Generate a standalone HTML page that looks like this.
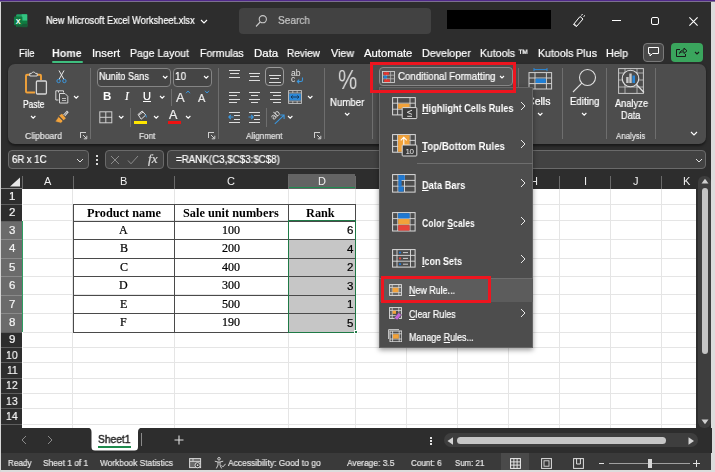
<!DOCTYPE html>
<html><head><meta charset="utf-8">
<style>
*{box-sizing:border-box;margin:0;padding:0}
html,body{width:715px;height:472px;overflow:hidden}
body{background:#dcdcdc;font-family:"Liberation Sans",sans-serif;position:relative;color:#fff}
.a{position:absolute}
.t{position:absolute;white-space:nowrap;line-height:1.16;will-change:transform;-webkit-text-stroke:0.22px currentColor}
u{text-decoration-thickness:0.7px;text-underline-offset:1px}
</style></head><body>
<div class="a" style="left:1.2px;top:0px;width:710.3px;height:470px;background:#2d2d2d;"></div>
<div class="a" style="left:0px;top:0px;width:715px;height:1.2px;background:#50288a;"></div>
<div class="a" style="left:0px;top:1.2px;width:715px;height:0.9px;background:#7c7090;"></div>
<div class="a" style="left:0px;top:2px;width:1.2px;height:470px;background:#d8d8d8;"></div>
<svg class="a" style="left:14px;top:14px" width="14" height="14" viewBox="0 0 14 14"><rect x="2.2" y="0.3" width="11" height="12.8" rx="1.2" fill="#21a366"/><rect x="7.7" y="0.3" width="5.5" height="6.4" fill="#33c481"/><rect x="7.7" y="6.7" width="5.5" height="6.4" fill="#107c41"/><rect x="2.2" y="9.8" width="11" height="3.3" fill="#185c37"/><rect x="0" y="2.6" width="8.4" height="8.6" rx="0.8" fill="#107c41"/><text x="4.2" y="9.6" font-size="7.2" font-weight="bold" fill="#fff" text-anchor="middle" font-family="Liberation Sans">X</text></svg>
<div class="t" style="left:46.2px;top:15.4px;font-size:10.2px;color:#fff;font-family:'Liberation Sans',sans-serif;transform:scaleX(0.906);transform-origin:0 50%;">New Microsoft Excel Worksheet.xlsx</div>
<svg class="a" style="left:199.5px;top:19.0px" width="8" height="5" viewBox="0 0 8 5"><path d="M1 1 L4 4 L7 1" stroke="#fff" stroke-width="1.1" fill="none"/></svg>
<div class="a" style="left:239px;top:8px;width:192px;height:26px;background:#424242;border-radius:4px;"></div>
<svg class="a" style="left:255px;top:14px" width="13" height="14" viewBox="0 0 13 14"><circle cx="7.8" cy="5.2" r="3.6" stroke="#c8c8c8" stroke-width="1.1" fill="none"/><path d="M5.2 8 L1 12.5" stroke="#c8c8c8" stroke-width="1.1"/></svg>
<div class="t" style="left:278.0px;top:15.4px;font-size:10.2px;color:#c4c4c4;font-family:'Liberation Sans',sans-serif;transform:scaleX(0.990);transform-origin:0 50%;">Search</div>
<div class="a" style="left:447px;top:9.6px;width:103.8px;height:19px;background:#000;"></div>
<svg class="a" style="left:571px;top:13px" width="16" height="16" viewBox="0 0 16 16"><path d="M2.5 11.5 L9 3.5 L12 6 L5.5 13.5 Z M3 10.8 L5.8 13.2 M10.5 2.5 L11.5 1 M12.5 3.5 L14 2.5" stroke="#fff" stroke-width="1" fill="none"/></svg>
<div class="a" style="left:611.8px;top:20px;width:9.2px;height:1px;background:#fff;"></div>
<div class="a" style="left:650.8px;top:16.8px;width:8.6px;height:8.6px;border:1px solid #fff;border-radius:2px;"></div>
<svg class="a" style="left:689px;top:17px" width="9" height="9" viewBox="0 0 9 9"><path d="M0.4 0.4 L8.6 8.6 M8.6 0.4 L0.4 8.6" stroke="#fff" stroke-width="1.1"/></svg>
<div class="t" style="left:18.6px;top:46.6px;font-size:11px;color:#fff;font-family:'Liberation Sans',sans-serif;transform:scaleX(0.880);transform-origin:0 50%;">File</div>
<div class="t" style="left:52.4px;top:46.6px;font-size:11px;color:#fff;font-family:'Liberation Sans',sans-serif;transform:scaleX(0.969);transform-origin:0 50%;font-weight:bold;-webkit-text-stroke:0;">Home</div>
<div class="t" style="left:92.0px;top:46.6px;font-size:11px;color:#fff;font-family:'Liberation Sans',sans-serif;transform:scaleX(1.018);transform-origin:0 50%;">Insert</div>
<div class="t" style="left:130.0px;top:46.6px;font-size:11px;color:#fff;font-family:'Liberation Sans',sans-serif;transform:scaleX(0.955);transform-origin:0 50%;">Page Layout</div>
<div class="t" style="left:200.0px;top:46.6px;font-size:11px;color:#fff;font-family:'Liberation Sans',sans-serif;transform:scaleX(0.953);transform-origin:0 50%;">Formulas</div>
<div class="t" style="left:253.8px;top:46.6px;font-size:11px;color:#fff;font-family:'Liberation Sans',sans-serif;transform:scaleX(1.042);transform-origin:0 50%;">Data</div>
<div class="t" style="left:287.0px;top:46.6px;font-size:11px;color:#fff;font-family:'Liberation Sans',sans-serif;transform:scaleX(0.915);transform-origin:0 50%;">Review</div>
<div class="t" style="left:331.0px;top:46.6px;font-size:11px;color:#fff;font-family:'Liberation Sans',sans-serif;transform:scaleX(0.973);transform-origin:0 50%;">View</div>
<div class="t" style="left:364.0px;top:46.6px;font-size:11px;color:#fff;font-family:'Liberation Sans',sans-serif;transform:scaleX(1.028);transform-origin:0 50%;">Automate</div>
<div class="t" style="left:422.0px;top:46.6px;font-size:11px;color:#fff;font-family:'Liberation Sans',sans-serif;transform:scaleX(0.973);transform-origin:0 50%;">Developer</div>
<div class="t" style="left:480.4px;top:46.6px;font-size:11px;color:#fff;font-family:'Liberation Sans',sans-serif;transform:scaleX(0.952);transform-origin:0 50%;">Kutools ™</div>
<div class="t" style="left:537.8px;top:46.6px;font-size:11px;color:#fff;font-family:'Liberation Sans',sans-serif;transform:scaleX(0.963);transform-origin:0 50%;">Kutools Plus</div>
<div class="t" style="left:606.0px;top:46.6px;font-size:11px;color:#fff;font-family:'Liberation Sans',sans-serif;transform:scaleX(0.973);transform-origin:0 50%;">Help</div>
<div class="a" style="left:52px;top:61px;width:31px;height:2px;background:#3fbf7f;border-radius:1px;"></div>
<div class="a" style="left:643px;top:43px;width:21px;height:19px;background:#484848;border:1px solid #7a7a7a;border-radius:4px;"></div>
<svg class="a" style="left:647px;top:46px" width="13" height="12" viewBox="0 0 13 12"><path d="M1.5 1.5 H11.5 V7.5 H5.5 L3 10 V7.5 H1.5 Z" stroke="#fff" stroke-width="1" fill="none"/></svg>
<div class="a" style="left:670.5px;top:43px;width:32.5px;height:19px;background:#3aa55d;border-radius:4px;"></div>
<svg class="a" style="left:675px;top:46px" width="13" height="12" viewBox="0 0 13 12"><path d="M5 3.5 H1.5 V10.5 H10.5 V8 M4.5 7.5 C5 5 7 4 9 4 V2 L12 4.8 L9 7.5 V5.8 C7.5 5.8 5.5 6 4.5 7.5 Z" stroke="#1a1a1a" stroke-width="1" fill="none"/></svg>
<svg class="a" style="left:693.5px;top:50.5px" width="6" height="4" viewBox="0 0 6 4"><path d="M1 1 L3 3 L5 1" stroke="#1a1a1a" stroke-width="1.1" fill="none"/></svg>
<div class="a" style="left:8px;top:64px;width:698px;height:79.5px;background:#4d4d4d;border-radius:7px;box-shadow:0 1.5px 2.5px rgba(0,0,0,0.45);"></div>
<div class="a" style="left:90px;top:68px;width:1px;height:71px;background:#6e6e6e;"></div>
<div class="a" style="left:217.5px;top:68px;width:1px;height:71px;background:#6e6e6e;"></div>
<div class="a" style="left:323.5px;top:68px;width:1px;height:71px;background:#6e6e6e;"></div>
<div class="a" style="left:372px;top:68px;width:1px;height:71px;background:#6e6e6e;"></div>
<div class="a" style="left:562.3px;top:68px;width:1px;height:71px;background:#6e6e6e;"></div>
<div class="a" style="left:605.8px;top:68px;width:1px;height:71px;background:#6e6e6e;"></div>
<div class="a" style="left:655px;top:68px;width:1px;height:71px;background:#6e6e6e;"></div>
<svg class="a" style="left:24px;top:70px" width="24" height="26" viewBox="0 0 24 26"><path d="M6 4.8 H3 a1 1 0 0 0 -1 1 V21.5 a1 1 0 0 0 1 1 H11" stroke="#f2a23a" stroke-width="1.9" fill="none"/><path d="M13 4.8 H16 a1 1 0 0 1 1 1 V10" stroke="#f2a23a" stroke-width="1.9" fill="none"/><path d="M5.8 6 V3.4 H7.6 a2 2 0 0 1 3.8 0 H13.2 V6 Z" stroke="#d8d8d8" stroke-width="1" fill="#4d4d4d"/><rect x="12.4" y="11" width="10" height="13" rx="1" stroke="#d8d8d8" stroke-width="1.3" fill="#4d4d4d"/></svg>
<div class="t" style="left:23.3px;top:98.8px;font-size:10.3px;color:#fff;font-family:'Liberation Sans',sans-serif;transform:scaleX(0.816);transform-origin:0 50%;">Paste</div>
<svg class="a" style="left:29.8px;top:114.60000000000001px" width="6.4" height="4.2" viewBox="0 0 6.4 4.2"><path d="M1 1 L3.2 3.2 L5.4 1" stroke="#fff" stroke-width="1.1" fill="none"/></svg>
<svg class="a" style="left:56px;top:70px" width="11" height="14" viewBox="0 0 11 14"><path d="M3 0.5 L7.8 9.2 M8 0.5 L3.2 9.2" stroke="#e8e8e8" stroke-width="1" fill="none"/><circle cx="2.6" cy="11" r="1.7" stroke="#3a96dd" stroke-width="1" fill="none"/><circle cx="8.4" cy="11" r="1.7" stroke="#3a96dd" stroke-width="1" fill="none"/></svg>
<svg class="a" style="left:55px;top:90px" width="14" height="14" viewBox="0 0 14 14"><path d="M3.5 2.5 V0.8 H8.5 V2.5" stroke="#d8d8d8" stroke-width="1" fill="none"/><path d="M3.5 10 H0.8 V0.8 H3.5" stroke="#d8d8d8" stroke-width="1" fill="none"/><path d="M4.5 3.5 H10 L12.8 6.3 V13 H4.5 Z" stroke="#d8d8d8" stroke-width="1" fill="#4d4d4d"/><path d="M7 8.5 H11 M7 10.5 H11" stroke="#d8d8d8" stroke-width="0.8"/></svg>
<svg class="a" style="left:72.8px;top:95.4px" width="6.4" height="4.2" viewBox="0 0 6.4 4.2"><path d="M1 1 L3.2 3.2 L5.4 1" stroke="#fff" stroke-width="1.1" fill="none"/></svg>
<svg class="a" style="left:54px;top:110px" width="15" height="14" viewBox="0 0 15 14"><path d="M9.5 5 L13 1.2 L14 2.2 L10.8 6" stroke="#d8d8d8" stroke-width="1.1" fill="none"/><path d="M5.2 5.6 L8 3.8 L11.8 8.2 L9.6 10.2 Z" fill="#f2a23a"/><path d="M4.6 6.6 L9 11 L7 13.2 L1.2 11.6 Z" fill="#f2a23a" stroke="#4d4d4d" stroke-width="0.6"/></svg>
<div class="t" style="left:24.7px;top:130.9px;font-size:9.2px;color:#e2e2e2;font-family:'Liberation Sans',sans-serif;transform:scaleX(0.940);transform-origin:0 50%;">Clipboard</div>
<svg class="a" style="left:80px;top:132px" width="8" height="8" viewBox="0 0 8 8"><path d="M0.5 3 V0.5 H3" stroke="#d0d0d0" stroke-width="1" fill="none"/><path d="M0.5 0.5 H6 M0.5 0.5 V6" stroke="#d0d0d0" stroke-width="1" fill="none"/><path d="M3 3 L6.5 6.5 M6.8 3.8 V6.8 H3.8" stroke="#d0d0d0" stroke-width="1" fill="none"/></svg>
<svg class="a" style="left:208px;top:132px" width="8" height="8" viewBox="0 0 8 8"><path d="M0.5 3 V0.5 H3" stroke="#d0d0d0" stroke-width="1" fill="none"/><path d="M0.5 0.5 H6 M0.5 0.5 V6" stroke="#d0d0d0" stroke-width="1" fill="none"/><path d="M3 3 L6.5 6.5 M6.8 3.8 V6.8 H3.8" stroke="#d0d0d0" stroke-width="1" fill="none"/></svg>
<svg class="a" style="left:314px;top:132px" width="8" height="8" viewBox="0 0 8 8"><path d="M0.5 3 V0.5 H3" stroke="#d0d0d0" stroke-width="1" fill="none"/><path d="M0.5 0.5 H6 M0.5 0.5 V6" stroke="#d0d0d0" stroke-width="1" fill="none"/><path d="M3 3 L6.5 6.5 M6.8 3.8 V6.8 H3.8" stroke="#d0d0d0" stroke-width="1" fill="none"/></svg>
<div class="a" style="left:96.5px;top:67.5px;width:74.5px;height:19px;background:#454545;border:1px solid #858585;border-radius:4px;"></div>
<div class="t" style="left:98.7px;top:71.3px;font-size:10.2px;color:#fff;font-family:'Liberation Sans',sans-serif;transform:scaleX(0.898);transform-origin:0 50%;">Nunito Sans</div>
<svg class="a" style="left:162.3px;top:75.4px" width="6.4" height="4.2" viewBox="0 0 6.4 4.2"><path d="M1 1 L3.2 3.2 L5.4 1" stroke="#fff" stroke-width="1.1" fill="none"/></svg>
<div class="a" style="left:172.5px;top:67.5px;width:39px;height:19px;background:#454545;border:1px solid #858585;border-radius:4px;"></div>
<div class="t" style="left:175.0px;top:71.3px;font-size:10.2px;color:#fff;font-family:'Liberation Sans',sans-serif;transform:scaleX(0.969);transform-origin:0 50%;">10</div>
<svg class="a" style="left:203.20000000000002px;top:75.4px" width="6.4" height="4.2" viewBox="0 0 6.4 4.2"><path d="M1 1 L3.2 3.2 L5.4 1" stroke="#fff" stroke-width="1.1" fill="none"/></svg>
<div class="t" style="left:103.0px;top:90.3px;font-size:11.5px;color:#fff;font-family:'Liberation Sans',sans-serif;font-weight:bold;-webkit-text-stroke:0;">B</div>
<div class="t" style="left:125.0px;top:90.3px;font-size:11.5px;color:#fff;font-family:'Liberation Sans',sans-serif;font-style:italic;font-family:'Liberation Serif',serif;">I</div>
<div class="t" style="left:143.0px;top:90.1px;font-size:11px;color:#fff;font-family:'Liberation Sans',sans-serif;text-decoration:underline;">U</div>
<svg class="a" style="left:158.5px;top:95.4px" width="6.4" height="4.2" viewBox="0 0 6.4 4.2"><path d="M1 1 L3.2 3.2 L5.4 1" stroke="#fff" stroke-width="1.1" fill="none"/></svg>
<div class="t" style="left:176.0px;top:90.0px;font-size:13px;color:#e8e8e8;font-family:'Liberation Sans',sans-serif;">A</div>
<svg class="a" style="left:185px;top:90px" width="6" height="4" viewBox="0 0 6 4"><path d="M1 3.2 L3 1 L5 3.2" stroke="#3a96dd" stroke-width="1" fill="none"/></svg>
<div class="t" style="left:197.6px;top:92.1px;font-size:11px;color:#e8e8e8;font-family:'Liberation Sans',sans-serif;">A</div>
<svg class="a" style="left:204px;top:90px" width="6" height="4" viewBox="0 0 6 4"><path d="M1 0.8 L3 3 L5 0.8" stroke="#3a96dd" stroke-width="1" fill="none"/></svg>
<svg class="a" style="left:99px;top:111px" width="14" height="13" viewBox="0 0 14 13"><rect x="0.8" y="0.8" width="12" height="11" stroke="#d0d0d0" stroke-width="1" fill="none"/><path d="M6.8 1 V12 M1 6.3 H13" stroke="#d0d0d0" stroke-width="1"/></svg>
<svg class="a" style="left:117.8px;top:115.4px" width="6.4" height="4.2" viewBox="0 0 6.4 4.2"><path d="M1 1 L3.2 3.2 L5.4 1" stroke="#fff" stroke-width="1.1" fill="none"/></svg>
<div class="a" style="left:129.5px;top:108px;width:1px;height:19px;background:#6e6e6e;"></div>
<div class="a" style="left:170.6px;top:88.5px;width:1px;height:17px;background:#6e6e6e;"></div>
<svg class="a" style="left:134px;top:110px" width="14" height="11" viewBox="0 0 14 11"><path d="M4 4.5 L8.2 1 L11.8 5 L7.2 9.2 Z" stroke="#e0e0e0" stroke-width="1" fill="none"/><path d="M5 5 L9 2" stroke="#e0e0e0" stroke-width="1"/><path d="M11 4.2 C12.6 5 13 6.2 12.6 7.8 C11.8 7 11.4 6 11 4.2Z" fill="#3a96dd"/></svg>
<div class="a" style="left:134px;top:120.5px;width:13px;height:3px;background:#ffe600;"></div>
<svg class="a" style="left:152.5px;top:115.4px" width="6.4" height="4.2" viewBox="0 0 6.4 4.2"><path d="M1 1 L3.2 3.2 L5.4 1" stroke="#fff" stroke-width="1.1" fill="none"/></svg>
<div class="t" style="left:169.0px;top:107.8px;font-size:12.5px;color:#f0f0f0;font-family:'Liberation Sans',sans-serif;">A</div>
<div class="a" style="left:167.5px;top:120.5px;width:13px;height:3px;background:#ee1111;"></div>
<svg class="a" style="left:184.8px;top:115.4px" width="6.4" height="4.2" viewBox="0 0 6.4 4.2"><path d="M1 1 L3.2 3.2 L5.4 1" stroke="#fff" stroke-width="1.1" fill="none"/></svg>
<div class="t" style="left:139.0px;top:130.9px;font-size:9.2px;color:#e2e2e2;font-family:'Liberation Sans',sans-serif;transform:scaleX(0.891);transform-origin:0 50%;">Font</div>
<div class="a" style="left:228.5px;top:69.5px;width:11.5px;height:1.2px;background:#dedede;"></div>
<div class="a" style="left:229.7px;top:73.2px;width:9px;height:1.2px;background:#dedede;"></div>
<div class="a" style="left:228.5px;top:76.9px;width:11.5px;height:1.2px;background:#dedede;"></div>
<div class="a" style="left:248.5px;top:72.5px;width:11.5px;height:1.2px;background:#dedede;"></div>
<div class="a" style="left:249.7px;top:76.2px;width:9px;height:1.2px;background:#dedede;"></div>
<div class="a" style="left:248.5px;top:79.9px;width:11.5px;height:1.2px;background:#dedede;"></div>
<div class="a" style="left:265.2px;top:67.2px;width:18.8px;height:18.8px;background:#494949;border:1px solid #9a9a9a;border-radius:4px;"></div>
<div class="a" style="left:269px;top:74.5px;width:11.5px;height:1.2px;background:#dedede;"></div>
<div class="a" style="left:270.2px;top:78.2px;width:9px;height:1.2px;background:#dedede;"></div>
<div class="a" style="left:269px;top:81.9px;width:11.5px;height:1.2px;background:#dedede;"></div>
<div class="t" style="left:290.5px;top:68.8px;font-size:8.6px;color:#e4e4e4;font-family:'Liberation Sans',sans-serif;transform:scaleX(0.993);transform-origin:0 50%;-webkit-text-stroke:0;">ab</div>
<div class="t" style="left:290.8px;top:75.3px;font-size:8.6px;color:#e4e4e4;font-family:'Liberation Sans',sans-serif;-webkit-text-stroke:0;">c</div>
<svg class="a" style="left:295.5px;top:76.5px" width="8" height="8" viewBox="0 0 8 8"><path d="M6.5 0.5 V3 a1.5 1.5 0 0 1 -1.5 1.5 H1.5 M3.2 2.6 L1.3 4.5 L3.2 6.4" stroke="#3a96dd" stroke-width="1.1" fill="none"/></svg>
<div class="a" style="left:228.5px;top:91.5px;width:11.5px;height:1.2px;background:#dedede;"></div>
<div class="a" style="left:228.5px;top:95.1px;width:8px;height:1.2px;background:#dedede;"></div>
<div class="a" style="left:228.5px;top:98.7px;width:11.5px;height:1.2px;background:#dedede;"></div>
<div class="a" style="left:228.5px;top:102.3px;width:8px;height:1.2px;background:#dedede;"></div>
<div class="a" style="left:248.5px;top:91.5px;width:11.5px;height:1.2px;background:#dedede;"></div>
<div class="a" style="left:250.5px;top:95.1px;width:7.5px;height:1.2px;background:#dedede;"></div>
<div class="a" style="left:248.5px;top:98.7px;width:11.5px;height:1.2px;background:#dedede;"></div>
<div class="a" style="left:250.5px;top:102.3px;width:7.5px;height:1.2px;background:#dedede;"></div>
<div class="a" style="left:269.5px;top:91.5px;width:11.5px;height:1.2px;background:#dedede;"></div>
<div class="a" style="left:273.0px;top:95.1px;width:8px;height:1.2px;background:#dedede;"></div>
<div class="a" style="left:269.5px;top:98.7px;width:11.5px;height:1.2px;background:#dedede;"></div>
<div class="a" style="left:273.0px;top:102.3px;width:8px;height:1.2px;background:#dedede;"></div>
<svg class="a" style="left:288px;top:90px" width="14" height="14" viewBox="0 0 14 14"><rect x="0.6" y="0.6" width="12.8" height="12.8" stroke="#c8c8c8" stroke-width="0.9" fill="none"/><path d="M0.6 3 H13.4 M0.6 11 H13.4 M4.8 0.6 V3 M9.2 0.6 V3 M4.8 11 V13.4 M9.2 11 V13.4" stroke="#c8c8c8" stroke-width="0.8"/><rect x="1.2" y="3.6" width="11.6" height="6.8" fill="#2b88d8"/><path d="M3 7 H11 M4.6 5.4 L3 7 L4.6 8.6 M9.4 5.4 L11 7 L9.4 8.6" stroke="#16324e" stroke-width="0.9" fill="none"/></svg>
<svg class="a" style="left:306.8px;top:95.4px" width="6.4" height="4.2" viewBox="0 0 6.4 4.2"><path d="M1 1 L3.2 3.2 L5.4 1" stroke="#fff" stroke-width="1.1" fill="none"/></svg>
<div class="a" style="left:228.5px;top:111.5px;width:11.5px;height:1.2px;background:#dedede;"></div>
<div class="a" style="left:234.0px;top:115.1px;width:6px;height:1.2px;background:#dedede;"></div>
<div class="a" style="left:234.0px;top:118.7px;width:6px;height:1.2px;background:#dedede;"></div>
<div class="a" style="left:228.5px;top:122.3px;width:11.5px;height:1.2px;background:#dedede;"></div>
<svg class="a" style="left:228px;top:114px" width="6" height="6" viewBox="0 0 6 6"><path d="M5.5 3 H1 M2.8 1 L0.8 3 L2.8 5" stroke="#3a96dd" stroke-width="1.1" fill="none"/></svg>
<div class="a" style="left:248.5px;top:111.5px;width:11.5px;height:1.2px;background:#dedede;"></div>
<div class="a" style="left:254.0px;top:115.1px;width:6px;height:1.2px;background:#dedede;"></div>
<div class="a" style="left:254.0px;top:118.7px;width:6px;height:1.2px;background:#dedede;"></div>
<div class="a" style="left:248.5px;top:122.3px;width:11.5px;height:1.2px;background:#dedede;"></div>
<svg class="a" style="left:248px;top:114px" width="6" height="6" viewBox="0 0 6 6"><path d="M0.5 3 H5 M3.2 1 L5.2 3 L3.2 5" stroke="#3a96dd" stroke-width="1.1" fill="none"/></svg>
<div class="a" style="left:265.5px;top:108px;width:1px;height:19px;background:#6e6e6e;"></div>
<svg class="a" style="left:268px;top:108px" width="18" height="17" viewBox="0 0 18 17"><text x="7" y="10.3" font-size="8.6" fill="#e4e4e4" text-anchor="middle" font-family="Liberation Sans" transform="rotate(-45 6.5 7)">ab</text><path d="M6.8 15.8 L15.8 7.4 M12.2 7 H16.1 V10.9" stroke="#3a96dd" stroke-width="1.1" fill="none"/></svg>
<svg class="a" style="left:286.8px;top:115.4px" width="6.4" height="4.2" viewBox="0 0 6.4 4.2"><path d="M1 1 L3.2 3.2 L5.4 1" stroke="#fff" stroke-width="1.1" fill="none"/></svg>
<div class="t" style="left:245.5px;top:130.9px;font-size:9.2px;color:#e2e2e2;font-family:'Liberation Sans',sans-serif;transform:scaleX(0.892);transform-origin:0 50%;">Alignment</div>
<div class="t" style="left:337.8px;top:65.1px;font-size:27px;color:#d8d8d8;font-family:'Liberation Sans',sans-serif;-webkit-text-stroke:0;transform:scaleX(0.8);transform-origin:0 50%;">%</div>
<div class="t" style="left:330.4px;top:96.8px;font-size:10.3px;color:#fff;font-family:'Liberation Sans',sans-serif;transform:scaleX(0.934);transform-origin:0 50%;">Number</div>
<svg class="a" style="left:343.8px;top:112.2px" width="6.4" height="4.2" viewBox="0 0 6.4 4.2"><path d="M1 1 L3.2 3.2 L5.4 1" stroke="#fff" stroke-width="1.1" fill="none"/></svg>
<div class="a" style="left:379px;top:67px;width:133.5px;height:18.5px;background:#575757;border:1px solid #8c8c8c;border-radius:4px;"></div>
<svg class="a" style="left:382px;top:70.5px" width="13" height="12" viewBox="0 0 13 12"><rect x="0.5" y="0.5" width="12" height="11" stroke="#d0d0d0" stroke-width="0.9" fill="none"/><path d="M0.5 4.2 H12.5 M0.5 7.8 H12.5 M4.6 0.5 V11.5 M8.6 0.5 V11.5" stroke="#c0c0c0" stroke-width="0.7"/><rect x="1.6" y="1.2" width="5.4" height="2.6" fill="#e8342e"/><rect x="1.6" y="4.8" width="3.4" height="2.6" fill="#1f7fd6"/><rect x="2.2" y="8.4" width="5.6" height="2.6" fill="#e8342e"/></svg>
<div class="t" style="left:398.3px;top:70.9px;font-size:10.2px;color:#fff;font-family:'Liberation Sans',sans-serif;transform:scaleX(0.952);transform-origin:0 50%;">Conditional Formatting</div>
<svg class="a" style="left:499px;top:74.8px" width="6" height="4" viewBox="0 0 6 4"><path d="M1 1 L3 3 L5 1" stroke="#fff" stroke-width="1.1" fill="none"/></svg>
<div class="a" style="left:518px;top:68px;width:1px;height:20px;background:#6e6e6e;"></div>
<svg class="a" style="left:528px;top:67px" width="25" height="23" viewBox="0 0 25 23"><path d="M6 2.6 H19 M6 1 V4.2 M19 1 V4.2" stroke="#2b88d8" stroke-width="1"/><rect x="1" y="5.6" width="22.6" height="16.4" stroke="#d0d0d0" stroke-width="1" fill="none"/><path d="M1 11 H23.6 M1 16.6 H23.6 M7 5.6 V22 M18.4 5.6 V22" stroke="#d0d0d0" stroke-width="1"/><rect x="7.6" y="11.6" width="10.2" height="4.4" fill="#1f7fd6"/></svg>
<div class="t" style="left:527.0px;top:96.0px;font-size:10.3px;color:#fff;font-family:'Liberation Sans',sans-serif;transform:scaleX(1.026);transform-origin:0 50%;">Cells</div>
<svg class="a" style="left:536.8px;top:112.10000000000001px" width="6.4" height="4.2" viewBox="0 0 6.4 4.2"><path d="M1 1 L3.2 3.2 L5.4 1" stroke="#fff" stroke-width="1.1" fill="none"/></svg>
<svg class="a" style="left:572px;top:68px" width="26" height="26" viewBox="0 0 26 26"><circle cx="15.5" cy="9.5" r="8" stroke="#e0e0e0" stroke-width="1.1" fill="none"/><path d="M9.8 15.2 L1 24" stroke="#e0e0e0" stroke-width="1.1"/></svg>
<div class="t" style="left:569.5px;top:95.5px;font-size:10.3px;color:#fff;font-family:'Liberation Sans',sans-serif;transform:scaleX(0.937);transform-origin:0 50%;">Editing</div>
<svg class="a" style="left:580.8px;top:112.10000000000001px" width="6.4" height="4.2" viewBox="0 0 6.4 4.2"><path d="M1 1 L3.2 3.2 L5.4 1" stroke="#fff" stroke-width="1.1" fill="none"/></svg>
<svg class="a" style="left:618px;top:68px" width="27" height="27" viewBox="0 0 27 27"><rect x="0.6" y="0.6" width="24.8" height="24.8" stroke="#c8c8c8" stroke-width="1" fill="none"/><path d="M0.6 5 H25.4 M0.6 12 H25.4 M0.6 19 H25.4 M7 0.6 V25.4 M19 0.6 V25.4" stroke="#c8c8c8" stroke-width="0.8"/><circle cx="12.5" cy="10.5" r="8.3" fill="#4d4d4d" stroke="#e0e0e0" stroke-width="1.1"/><path d="M18.5 16.5 L26 24.5" stroke="#e0e0e0" stroke-width="1.2"/><rect x="8.2" y="9" width="2.4" height="6" fill="#c8c8c8"/><rect x="11.3" y="5.5" width="2.4" height="9.5" fill="#c8c8c8"/><rect x="14.4" y="7.5" width="2.6" height="7.5" fill="#2b88d8"/></svg>
<div class="t" style="left:615.0px;top:97.5px;font-size:10.3px;color:#fff;font-family:'Liberation Sans',sans-serif;transform:scaleX(0.901);transform-origin:0 50%;">Analyze</div>
<div class="t" style="left:621.4px;top:110.0px;font-size:10.3px;color:#fff;font-family:'Liberation Sans',sans-serif;transform:scaleX(0.892);transform-origin:0 50%;">Data</div>
<div class="t" style="left:616.4px;top:130.9px;font-size:9.2px;color:#e2e2e2;font-family:'Liberation Sans',sans-serif;transform:scaleX(0.858);transform-origin:0 50%;">Analysis</div>
<svg class="a" style="left:690px;top:130.5px" width="8" height="5" viewBox="0 0 8 5"><path d="M1 1 L4 4 L7 1" stroke="#fff" stroke-width="1.1" fill="none"/></svg>
<div class="a" style="left:8px;top:150px;width:80.5px;height:18.5px;background:#424242;border:1px solid #6a6a6a;border-radius:4px;"></div>
<div class="t" style="left:12.3px;top:153.9px;font-size:10.2px;color:#fff;font-family:'Liberation Sans',sans-serif;transform:scaleX(0.936);transform-origin:0 50%;">6R x 1C</div>
<svg class="a" style="left:76px;top:157.5px" width="8" height="5" viewBox="0 0 8 5"><path d="M1 1 L4 4 L7 1" stroke="#e0e0e0" stroke-width="1" fill="none"/></svg>
<div class="a" style="left:96px;top:155px;width:1.5px;height:1.5px;background:#d8d8d8;"></div>
<div class="a" style="left:96px;top:159px;width:1.5px;height:1.5px;background:#d8d8d8;"></div>
<div class="a" style="left:96px;top:163px;width:1.5px;height:1.5px;background:#d8d8d8;"></div>
<div class="a" style="left:104.5px;top:150px;width:59px;height:18.5px;background:#424242;border:1px solid #6a6a6a;border-radius:4px;"></div>
<svg class="a" style="left:110px;top:154.5px" width="10" height="10" viewBox="0 0 10 10"><path d="M1 1 L9 9 M9 1 L1 9" stroke="#8c8c8c" stroke-width="1"/></svg>
<svg class="a" style="left:127px;top:154.5px" width="12" height="10" viewBox="0 0 12 10"><path d="M1 5.5 L4 8.8 L11 1" stroke="#8c8c8c" stroke-width="1" fill="none"/></svg>
<div class="t" style="left:147.5px;top:151.8px;font-size:12.5px;color:#d8d8d8;font-family:'Liberation Serif',serif;transform:scaleX(1.056);transform-origin:0 50%;font-style:italic;">fx</div>
<div class="a" style="left:167px;top:150px;width:538.5px;height:18.5px;background:#424242;border:1px solid #6a6a6a;border-radius:4px;"></div>
<div class="t" style="left:175.5px;top:153.9px;font-size:10.2px;color:#fff;font-family:'Liberation Sans',sans-serif;transform:scaleX(0.958);transform-origin:0 50%;">=RANK(C3,$C$3:$C$8)</div>
<svg class="a" style="left:694.5px;top:157.5px" width="8" height="5" viewBox="0 0 8 5"><path d="M1 1 L4 4 L7 1" stroke="#e0e0e0" stroke-width="1" fill="none"/></svg>
<div class="a" style="left:1.3px;top:174px;width:694.4000000000001px;height:14.5px;background:#2d2d2d;"></div>
<div class="a" style="left:1.3px;top:188.5px;width:694.4000000000001px;height:239.0px;background:#fff;"></div>
<div class="a" style="left:72px;top:188.5px;width:1px;height:239.0px;background:#e5e5e5;"></div>
<div class="a" style="left:174px;top:188.5px;width:1px;height:239.0px;background:#e5e5e5;"></div>
<div class="a" style="left:288px;top:188.5px;width:1px;height:239.0px;background:#e5e5e5;"></div>
<div class="a" style="left:355px;top:188.5px;width:1px;height:239.0px;background:#e5e5e5;"></div>
<div class="a" style="left:406px;top:188.5px;width:1px;height:239.0px;background:#e5e5e5;"></div>
<div class="a" style="left:457px;top:188.5px;width:1px;height:239.0px;background:#e5e5e5;"></div>
<div class="a" style="left:508px;top:188.5px;width:1px;height:239.0px;background:#e5e5e5;"></div>
<div class="a" style="left:559px;top:188.5px;width:1px;height:239.0px;background:#e5e5e5;"></div>
<div class="a" style="left:610px;top:188.5px;width:1px;height:239.0px;background:#e5e5e5;"></div>
<div class="a" style="left:661px;top:188.5px;width:1px;height:239.0px;background:#e5e5e5;"></div>
<div class="a" style="left:22.5px;top:204px;width:673.2px;height:1px;background:#e5e5e5;"></div>
<div class="a" style="left:22.5px;top:220px;width:673.2px;height:1px;background:#e5e5e5;"></div>
<div class="a" style="left:22.5px;top:239px;width:673.2px;height:1px;background:#e5e5e5;"></div>
<div class="a" style="left:22.5px;top:258px;width:673.2px;height:1px;background:#e5e5e5;"></div>
<div class="a" style="left:22.5px;top:276px;width:673.2px;height:1px;background:#e5e5e5;"></div>
<div class="a" style="left:22.5px;top:294px;width:673.2px;height:1px;background:#e5e5e5;"></div>
<div class="a" style="left:22.5px;top:313px;width:673.2px;height:1px;background:#e5e5e5;"></div>
<div class="a" style="left:22.5px;top:332px;width:673.2px;height:1px;background:#e5e5e5;"></div>
<div class="a" style="left:22.5px;top:347px;width:673.2px;height:1px;background:#e5e5e5;"></div>
<div class="a" style="left:22.5px;top:362px;width:673.2px;height:1px;background:#e5e5e5;"></div>
<div class="a" style="left:22.5px;top:378px;width:673.2px;height:1px;background:#e5e5e5;"></div>
<div class="a" style="left:22.5px;top:393px;width:673.2px;height:1px;background:#e5e5e5;"></div>
<div class="a" style="left:22.5px;top:408px;width:673.2px;height:1px;background:#e5e5e5;"></div>
<div class="a" style="left:22.5px;top:424px;width:673.2px;height:1px;background:#e5e5e5;"></div>
<div class="a" style="left:288.3px;top:174px;width:67.2px;height:14.5px;background:#636363;"></div>
<div class="a" style="left:288.3px;top:187.3px;width:67.2px;height:1.2px;background:#1f8a50;"></div>
<div class="t" style="left:44.1px;top:175.3px;font-size:11px;color:#f0f0f0;font-family:'Liberation Sans',sans-serif;-webkit-text-stroke:0;">A</div>
<div class="a" style="left:72.5px;top:176px;width:1px;height:12.5px;background:#6a6a6a;"></div>
<div class="t" style="left:119.8px;top:175.3px;font-size:11px;color:#f0f0f0;font-family:'Liberation Sans',sans-serif;-webkit-text-stroke:0;">B</div>
<div class="a" style="left:173.5px;top:176px;width:1px;height:12.5px;background:#6a6a6a;"></div>
<div class="t" style="left:227.2px;top:175.3px;font-size:11px;color:#f0f0f0;font-family:'Liberation Sans',sans-serif;-webkit-text-stroke:0;">C</div>
<div class="a" style="left:287.8px;top:176px;width:1px;height:12.5px;background:#6a6a6a;"></div>
<div class="t" style="left:317.8px;top:175.3px;font-size:11px;color:#f0f0f0;font-family:'Liberation Sans',sans-serif;-webkit-text-stroke:0;">D</div>
<div class="a" style="left:354.8px;top:176px;width:1px;height:12.5px;background:#6a6a6a;"></div>
<div class="t" style="left:382.3px;top:175.3px;font-size:11px;color:#f0f0f0;font-family:'Liberation Sans',sans-serif;-webkit-text-stroke:0;">E</div>
<div class="a" style="left:405.9px;top:176px;width:1px;height:12.5px;background:#6a6a6a;"></div>
<div class="t" style="left:428.6px;top:175.3px;font-size:11px;color:#f0f0f0;font-family:'Liberation Sans',sans-serif;-webkit-text-stroke:0;">F</div>
<div class="a" style="left:457.0px;top:176px;width:1px;height:12.5px;background:#6a6a6a;"></div>
<div class="t" style="left:478.7px;top:175.3px;font-size:11px;color:#f0f0f0;font-family:'Liberation Sans',sans-serif;-webkit-text-stroke:0;">G</div>
<div class="a" style="left:508.0px;top:176px;width:1px;height:12.5px;background:#6a6a6a;"></div>
<div class="t" style="left:530.0px;top:175.3px;font-size:11px;color:#f0f0f0;font-family:'Liberation Sans',sans-serif;-webkit-text-stroke:0;">H</div>
<div class="a" style="left:559.0px;top:176px;width:1px;height:12.5px;background:#6a6a6a;"></div>
<div class="t" style="left:583.5px;top:175.3px;font-size:11px;color:#f0f0f0;font-family:'Liberation Sans',sans-serif;-webkit-text-stroke:0;">I</div>
<div class="a" style="left:610.0px;top:176px;width:1px;height:12.5px;background:#6a6a6a;"></div>
<div class="t" style="left:633.2px;top:175.3px;font-size:11px;color:#f0f0f0;font-family:'Liberation Sans',sans-serif;-webkit-text-stroke:0;">J</div>
<div class="a" style="left:661.0px;top:176px;width:1px;height:12.5px;background:#6a6a6a;"></div>
<div class="t" style="left:683.3px;top:175.3px;font-size:11px;color:#f0f0f0;font-family:'Liberation Sans',sans-serif;-webkit-text-stroke:0;">K</div>
<div class="a" style="left:22px;top:176px;width:1px;height:12.5px;background:#6a6a6a;"></div>
<svg class="a" style="left:8px;top:176px" width="13" height="11" viewBox="0 0 13 11"><path d="M12 1.5 V10.5 H2 Z" fill="#e8e8e8"/></svg>
<div class="a" style="left:1.3px;top:187.7px;width:21.2px;height:0.8px;background:#8a8a8a;"></div>
<div class="a" style="left:1.3px;top:188.5px;width:21.2px;height:239.0px;background:#2d2d2d;"></div>
<div class="a" style="left:1.3px;top:221.0px;width:21.2px;height:18.5px;background:#6b6b6b;"></div>
<div class="a" style="left:1.3px;top:239.5px;width:21.2px;height:18.5px;background:#6b6b6b;"></div>
<div class="a" style="left:1.3px;top:258.0px;width:21.2px;height:18.5px;background:#6b6b6b;"></div>
<div class="a" style="left:1.3px;top:276.5px;width:21.2px;height:18.5px;background:#6b6b6b;"></div>
<div class="a" style="left:1.3px;top:295.0px;width:21.2px;height:18.5px;background:#6b6b6b;"></div>
<div class="a" style="left:1.3px;top:313.5px;width:21.2px;height:18.5px;background:#6b6b6b;"></div>
<div class="a" style="left:1.3px;top:204.1px;width:21.2px;height:1px;background:#5e5e5e;"></div>
<div class="t" style="left:9.0px;top:190.2px;font-size:11.5px;color:#f4f4f4;font-family:'Liberation Sans',sans-serif;">1</div>
<div class="a" style="left:1.3px;top:220.5px;width:21.2px;height:1px;background:#5e5e5e;"></div>
<div class="t" style="left:9.0px;top:206.4px;font-size:11.5px;color:#f4f4f4;font-family:'Liberation Sans',sans-serif;">2</div>
<div class="a" style="left:1.3px;top:239.0px;width:21.2px;height:1px;background:#8a8a8a;"></div>
<div class="t" style="left:9.0px;top:223.9px;font-size:11.5px;color:#f4f4f4;font-family:'Liberation Sans',sans-serif;">3</div>
<div class="a" style="left:1.3px;top:257.5px;width:21.2px;height:1px;background:#8a8a8a;"></div>
<div class="t" style="left:9.0px;top:242.4px;font-size:11.5px;color:#f4f4f4;font-family:'Liberation Sans',sans-serif;">4</div>
<div class="a" style="left:1.3px;top:276.0px;width:21.2px;height:1px;background:#8a8a8a;"></div>
<div class="t" style="left:9.0px;top:260.9px;font-size:11.5px;color:#f4f4f4;font-family:'Liberation Sans',sans-serif;">5</div>
<div class="a" style="left:1.3px;top:294.5px;width:21.2px;height:1px;background:#8a8a8a;"></div>
<div class="t" style="left:9.0px;top:279.4px;font-size:11.5px;color:#f4f4f4;font-family:'Liberation Sans',sans-serif;">6</div>
<div class="a" style="left:1.3px;top:313.0px;width:21.2px;height:1px;background:#8a8a8a;"></div>
<div class="t" style="left:9.0px;top:297.9px;font-size:11.5px;color:#f4f4f4;font-family:'Liberation Sans',sans-serif;">7</div>
<div class="a" style="left:1.3px;top:331.5px;width:21.2px;height:1px;background:#5e5e5e;"></div>
<div class="t" style="left:9.0px;top:316.4px;font-size:11.5px;color:#f4f4f4;font-family:'Liberation Sans',sans-serif;">8</div>
<div class="a" style="left:1.3px;top:346.85px;width:21.2px;height:1px;background:#5e5e5e;"></div>
<div class="t" style="left:9.0px;top:333.3px;font-size:11.5px;color:#f4f4f4;font-family:'Liberation Sans',sans-serif;">9</div>
<div class="a" style="left:1.3px;top:362.20000000000005px;width:21.2px;height:1px;background:#5e5e5e;"></div>
<div class="t" style="left:6.1px;top:348.7px;font-size:11.5px;color:#f4f4f4;font-family:'Liberation Sans',sans-serif;transform:scaleX(0.906);transform-origin:0 50%;">10</div>
<div class="a" style="left:1.3px;top:377.55000000000007px;width:21.2px;height:1px;background:#5e5e5e;"></div>
<div class="t" style="left:6.5px;top:364.0px;font-size:11.5px;color:#f4f4f4;font-family:'Liberation Sans',sans-serif;transform:scaleX(0.899);transform-origin:0 50%;">11</div>
<div class="a" style="left:1.3px;top:392.9000000000001px;width:21.2px;height:1px;background:#5e5e5e;"></div>
<div class="t" style="left:6.1px;top:379.4px;font-size:11.5px;color:#f4f4f4;font-family:'Liberation Sans',sans-serif;transform:scaleX(0.906);transform-origin:0 50%;">12</div>
<div class="a" style="left:1.3px;top:408.2500000000001px;width:21.2px;height:1px;background:#5e5e5e;"></div>
<div class="t" style="left:6.1px;top:394.7px;font-size:11.5px;color:#f4f4f4;font-family:'Liberation Sans',sans-serif;transform:scaleX(0.906);transform-origin:0 50%;">13</div>
<div class="a" style="left:1.3px;top:423.60000000000014px;width:21.2px;height:1px;background:#5e5e5e;"></div>
<div class="t" style="left:6.1px;top:410.1px;font-size:11.5px;color:#f4f4f4;font-family:'Liberation Sans',sans-serif;transform:scaleX(0.906);transform-origin:0 50%;">14</div>
<div class="a" style="left:1.3px;top:438.95000000000016px;width:21.2px;height:1px;background:#5e5e5e;"></div>
<div class="a" style="left:21.5px;top:221.0px;width:1.2px;height:111.0px;background:#2e9e62;"></div>
<div class="a" style="left:288.3px;top:239.5px;width:67.2px;height:92.5px;background:#c6c6c6;"></div>
<div class="a" style="left:72.5px;top:204.1px;width:1px;height:128.4px;background:#4a4a4a;"></div>
<div class="a" style="left:173.5px;top:204.1px;width:1px;height:128.4px;background:#4a4a4a;"></div>
<div class="a" style="left:287.8px;top:204.1px;width:1px;height:128.4px;background:#4a4a4a;"></div>
<div class="a" style="left:355.0px;top:204.1px;width:1px;height:128.4px;background:#4a4a4a;"></div>
<div class="a" style="left:72.5px;top:204.1px;width:283.5px;height:1px;background:#4a4a4a;"></div>
<div class="a" style="left:72.5px;top:220.5px;width:283.5px;height:1px;background:#4a4a4a;"></div>
<div class="a" style="left:72.5px;top:239.0px;width:283.5px;height:1px;background:#4a4a4a;"></div>
<div class="a" style="left:72.5px;top:257.5px;width:283.5px;height:1px;background:#4a4a4a;"></div>
<div class="a" style="left:72.5px;top:276.0px;width:283.5px;height:1px;background:#4a4a4a;"></div>
<div class="a" style="left:72.5px;top:294.5px;width:283.5px;height:1px;background:#4a4a4a;"></div>
<div class="a" style="left:72.5px;top:313.0px;width:283.5px;height:1px;background:#4a4a4a;"></div>
<div class="a" style="left:72.5px;top:331.5px;width:283.5px;height:1px;background:#4a4a4a;"></div>
<div class="a" style="left:287.6px;top:220.3px;width:68.6px;height:112.4px;border:1.4px solid #1e7a46;"></div>
<div class="a" style="left:353.8px;top:330.0px;width:4px;height:4px;background:#1e7a46;border:0.7px solid #fff;"></div>
<div class="t" style="left:86.8px;top:206.3px;font-size:12.3px;color:#000;font-family:'Liberation Serif',serif;font-weight:bold;-webkit-text-stroke:0;">Product name</div>
<div class="t" style="left:183.4px;top:206.3px;font-size:12.3px;color:#000;font-family:'Liberation Serif',serif;letter-spacing:-0.00px;font-weight:bold;-webkit-text-stroke:0;">Sale unit numbers</div>
<div class="t" style="left:306.4px;top:206.3px;font-size:12.3px;color:#000;font-family:'Liberation Serif',serif;letter-spacing:-0.00px;font-weight:bold;-webkit-text-stroke:0;">Rank</div>
<div class="t" style="left:119.2px;top:223.8px;font-size:12px;color:#000;font-family:'Liberation Serif',serif;">A</div>
<div class="t" style="left:222.2px;top:223.8px;font-size:12px;color:#000;font-family:'Liberation Serif',serif;">100</div>
<div class="t" style="left:346.5px;top:224.1px;font-size:11.5px;color:#000;font-family:'Liberation Sans',sans-serif;">6</div>
<div class="t" style="left:119.5px;top:242.3px;font-size:12px;color:#000;font-family:'Liberation Serif',serif;">B</div>
<div class="t" style="left:222.2px;top:242.3px;font-size:12px;color:#000;font-family:'Liberation Serif',serif;">200</div>
<div class="t" style="left:346.5px;top:242.6px;font-size:11.5px;color:#000;font-family:'Liberation Sans',sans-serif;">4</div>
<div class="t" style="left:119.5px;top:260.8px;font-size:12px;color:#000;font-family:'Liberation Serif',serif;">C</div>
<div class="t" style="left:222.2px;top:260.8px;font-size:12px;color:#000;font-family:'Liberation Serif',serif;">400</div>
<div class="t" style="left:346.5px;top:261.1px;font-size:11.5px;color:#000;font-family:'Liberation Sans',sans-serif;">2</div>
<div class="t" style="left:119.2px;top:279.3px;font-size:12px;color:#000;font-family:'Liberation Serif',serif;">D</div>
<div class="t" style="left:222.2px;top:279.3px;font-size:12px;color:#000;font-family:'Liberation Serif',serif;">300</div>
<div class="t" style="left:346.5px;top:279.6px;font-size:11.5px;color:#000;font-family:'Liberation Sans',sans-serif;">3</div>
<div class="t" style="left:119.8px;top:297.8px;font-size:12px;color:#000;font-family:'Liberation Serif',serif;">E</div>
<div class="t" style="left:222.2px;top:297.8px;font-size:12px;color:#000;font-family:'Liberation Serif',serif;">500</div>
<div class="t" style="left:346.5px;top:298.1px;font-size:11.5px;color:#000;font-family:'Liberation Sans',sans-serif;">1</div>
<div class="t" style="left:120.2px;top:316.3px;font-size:12px;color:#000;font-family:'Liberation Serif',serif;">F</div>
<div class="t" style="left:222.2px;top:316.3px;font-size:12px;color:#000;font-family:'Liberation Serif',serif;">190</div>
<div class="t" style="left:346.5px;top:316.6px;font-size:11.5px;color:#000;font-family:'Liberation Sans',sans-serif;">5</div>
<div class="a" style="left:378.8px;top:86.8px;width:154.2px;height:261.7px;background:#4d4d4d;border:1px solid #666;box-shadow:0 2px 5px rgba(0,0,0,0.4);"></div>
<div class="a" style="left:378.8px;top:278.8px;width:154.2px;height:23.4px;background:#5c5c5c;"></div>
<div class="a" style="left:416.5px;top:163.2px;width:116.5px;height:1px;background:#6e6e6e;"></div>
<div class="a" style="left:378.8px;top:277.5px;width:154.2px;height:0.8px;background:#6e6e6e;"></div>
<svg class="a" style="left:392px;top:96.5px" width="26" height="23" viewBox="0 0 26 23"><rect x="0.6" y="0.6" width="22.7" height="17.3" stroke="#dcdcdc" stroke-width="1" fill="none"/><path d="M0.6 6.2 H23.3 M0.6 12.2 H23.3 M5.6 0.6 V17.9 M18 0.6 V17.9" stroke="#dcdcdc" stroke-width="0.9"/><rect x="6.1" y="6.7" width="11.4" height="5" fill="#f2a23a"/><rect x="10.2" y="10.6" width="14.6" height="11" rx="0.8" fill="#3c3c3c" stroke="#dcdcdc" stroke-width="1"/><path d="M20 13.2 L15.2 15.3 L20 17.4 M15.2 19.3 H20" stroke="#dcdcdc" stroke-width="1" fill="none"/></svg>
<div class="t" style="left:422.4px;top:103.0px;font-size:10.2px;color:#fff;font-family:'Liberation Sans',sans-serif;transform:scaleX(0.898);transform-origin:0 50%;font-weight:bold;-webkit-text-stroke:0;"><u>H</u>ighlight Cells Rules</div>
<svg class="a" style="left:520px;top:101px" width="6" height="10" viewBox="0 0 6 10"><path d="M1 1 L5 5 L1 9" stroke="#e8e8e8" stroke-width="1" fill="none"/></svg>
<svg class="a" style="left:392px;top:134px" width="26" height="23" viewBox="0 0 26 23"><rect x="0.6" y="0.6" width="22.7" height="17.6" stroke="#dcdcdc" stroke-width="1" fill="none"/><path d="M0.6 6.4 H23.3 M0.6 12.4 H23.3 M5.6 0.6 V18.2 M18 0.6 V18.2" stroke="#dcdcdc" stroke-width="0.9"/><rect x="6.1" y="1.1" width="11.4" height="16.6" fill="#f2a23a"/><path d="M11.8 12 V3.4 M8.8 6.4 L11.8 3.2 L14.8 6.4" stroke="#fff" stroke-width="1.1" fill="none"/><rect x="10.2" y="11" width="14.6" height="11" rx="0.8" fill="#3c3c3c" stroke="#dcdcdc" stroke-width="1"/><text x="17.5" y="19.6" font-size="8" fill="#e8e8e8" text-anchor="middle" font-family="Liberation Sans" letter-spacing="-0.4">10</text></svg>
<div class="t" style="left:422.4px;top:141.0px;font-size:10.2px;color:#fff;font-family:'Liberation Sans',sans-serif;transform:scaleX(0.954);transform-origin:0 50%;font-weight:bold;-webkit-text-stroke:0;"><u>T</u>op/Bottom Rules</div>
<svg class="a" style="left:520px;top:138.5px" width="6" height="10" viewBox="0 0 6 10"><path d="M1 1 L5 5 L1 9" stroke="#e8e8e8" stroke-width="1" fill="none"/></svg>
<svg class="a" style="left:392px;top:173.5px" width="24" height="19" viewBox="0 0 24 19"><rect x="0.6" y="0.6" width="22.5" height="17.5" stroke="#dcdcdc" stroke-width="1" fill="none"/><path d="M0.6 6.4 H23 M0.6 12.2 H23 M6 0.6 V18 M12.5 0.6 V18" stroke="#dcdcdc" stroke-width="0.9"/><rect x="6.4" y="1.2" width="6.4" height="4.8" fill="#1f78d1"/><rect x="6.4" y="6" width="3.2" height="6.6" fill="#1f78d1"/><rect x="6.4" y="12.6" width="5.2" height="5" fill="#1f78d1"/><rect x="6.4" y="1.2" width="1" height="1" fill="#1f78d1"/></svg>
<div class="t" style="left:422.4px;top:180.0px;font-size:10.2px;color:#fff;font-family:'Liberation Sans',sans-serif;transform:scaleX(0.909);transform-origin:0 50%;font-weight:bold;-webkit-text-stroke:0;"><u>D</u>ata Bars</div>
<svg class="a" style="left:520px;top:178px" width="6" height="10" viewBox="0 0 6 10"><path d="M1 1 L5 5 L1 9" stroke="#e8e8e8" stroke-width="1" fill="none"/></svg>
<svg class="a" style="left:392px;top:211.5px" width="24" height="20" viewBox="0 0 24 20"><rect x="0.6" y="0.6" width="22.5" height="18.4" stroke="#dcdcdc" stroke-width="1" fill="none"/><path d="M0.6 6.6 H23 M0.6 12.8 H23 M5.8 0.6 V19 M18 0.6 V19" stroke="#dcdcdc" stroke-width="0.9"/><rect x="6.2" y="1.2" width="11.4" height="5.2" fill="#1f78d1"/><rect x="6.2" y="7" width="11.4" height="5.4" fill="#f2a23a"/><rect x="6.2" y="13.2" width="11.4" height="5.4" fill="#e8443a"/></svg>
<div class="t" style="left:422.4px;top:217.8px;font-size:10.2px;color:#fff;font-family:'Liberation Sans',sans-serif;transform:scaleX(0.856);transform-origin:0 50%;font-weight:bold;-webkit-text-stroke:0;">Color <u>S</u>cales</div>
<svg class="a" style="left:520px;top:216px" width="6" height="10" viewBox="0 0 6 10"><path d="M1 1 L5 5 L1 9" stroke="#e8e8e8" stroke-width="1" fill="none"/></svg>
<svg class="a" style="left:392px;top:248.5px" width="24" height="19" viewBox="0 0 24 19"><rect x="0.6" y="0.6" width="22.5" height="17.5" stroke="#dcdcdc" stroke-width="1" fill="none"/><path d="M0.6 6.4 H23 M0.6 12.2 H23 M5 0.6 V18 M18.5 0.6 V18" stroke="#dcdcdc" stroke-width="0.9"/><circle cx="8" cy="3.6" r="1.1" fill="#1f78d1"/><circle cx="8" cy="9.4" r="1.1" fill="#e8443a"/><circle cx="8" cy="15.2" r="1.1" fill="#1f78d1"/><path d="M11 3.6 H16 M11 9.4 H16 M11 15.2 H16" stroke="#dcdcdc" stroke-width="0.9"/></svg>
<div class="t" style="left:422.4px;top:255.5px;font-size:10.2px;color:#fff;font-family:'Liberation Sans',sans-serif;transform:scaleX(0.882);transform-origin:0 50%;font-weight:bold;-webkit-text-stroke:0;"><u>I</u>con Sets</div>
<svg class="a" style="left:520px;top:253.5px" width="6" height="10" viewBox="0 0 6 10"><path d="M1 1 L5 5 L1 9" stroke="#e8e8e8" stroke-width="1" fill="none"/></svg>
<svg class="a" style="left:388.8px;top:283.8px" width="13" height="12" viewBox="0 0 13 12"><rect x="0.6" y="0.6" width="11.8" height="10.8" stroke="#dcdcdc" stroke-width="1" fill="none"/><path d="M0.6 3.4 H12.4 M0.6 8.6 H12.4 M3.2 0.6 V11.4 M9.8 0.6 V11.4" stroke="#dcdcdc" stroke-width="0.8"/><rect x="3.6" y="3.8" width="5.8" height="4.4" fill="#f2a23a"/></svg>
<div class="t" style="left:409.0px;top:285.3px;font-size:10px;color:#fff;font-family:'Liberation Sans',sans-serif;transform:scaleX(0.890);transform-origin:0 50%;"><u>N</u>ew Rule...</div>
<svg class="a" style="left:388.8px;top:306.5px" width="14" height="14" viewBox="0 0 14 14"><rect x="0.6" y="0.6" width="11.8" height="10.8" stroke="#dcdcdc" stroke-width="1" fill="none"/><path d="M0.6 3.4 H12.4 M0.6 8.6 H12.4 M3.2 0.6 V11.4 M9.8 0.6 V11.4" stroke="#dcdcdc" stroke-width="0.8"/><rect x="3.6" y="3.8" width="3.4" height="3" fill="#f2a23a"/><path d="M5.2 10.8 L9.6 5.4 L12.6 7.8 L8.2 13.2 Z" fill="#c264d8" stroke="#4d4d4d" stroke-width="0.7"/></svg>
<div class="t" style="left:409.0px;top:308.7px;font-size:10px;color:#fff;font-family:'Liberation Sans',sans-serif;transform:scaleX(0.892);transform-origin:0 50%;"><u>C</u>lear Rules</div>
<svg class="a" style="left:520px;top:308px" width="6" height="10" viewBox="0 0 6 10"><path d="M1 1 L5 5 L1 9" stroke="#e8e8e8" stroke-width="1" fill="none"/></svg>
<svg class="a" style="left:388.4px;top:329.3px" width="14" height="13" viewBox="0 0 14 13"><path d="M0.6 10 V0.6 H11" stroke="#dcdcdc" stroke-width="0.9" fill="none"/><g transform="translate(1.4,1.4)"><rect x="0.6" y="0.6" width="11.8" height="10.8" stroke="#dcdcdc" stroke-width="1" fill="none"/><path d="M0.6 3.4 H12.4 M0.6 8.6 H12.4 M3.2 0.6 V11.4 M9.8 0.6 V11.4" stroke="#dcdcdc" stroke-width="0.8"/><rect x="3.6" y="3.8" width="5.8" height="4.4" fill="#f2a23a"/></g></svg>
<div class="t" style="left:409.0px;top:331.5px;font-size:10px;color:#fff;font-family:'Liberation Sans',sans-serif;transform:scaleX(0.890);transform-origin:0 50%;">Manage <u>R</u>ules...</div>
<div class="a" style="left:370px;top:62.3px;width:146.2px;height:30.5px;border:3.3px solid #ee151f;"></div>
<div class="a" style="left:380.8px;top:275.6px;width:110.6px;height:27.1px;border:3.3px solid #ee151f;"></div>
<div class="a" style="left:695.7px;top:174px;width:15.8px;height:254px;background:#2d2d2d;"></div>
<div class="a" style="left:698px;top:175.5px;width:13px;height:252.5px;background:#3e3e3e;border-radius:6px;"></div>
<svg class="a" style="left:700.8px;top:178px" width="8" height="6" viewBox="0 0 8 6"><path d="M0.5 5.5 L4 0.8 L7.5 5.5 Z" fill="#d0d0d0"/></svg>
<div class="a" style="left:701.6px;top:187.8px;width:6.8px;height:166.5px;background:#c4c4c4;border-radius:3.4px;"></div>
<svg class="a" style="left:700.8px;top:419px" width="8" height="6" viewBox="0 0 8 6"><path d="M0.5 0.5 L4 5.2 L7.5 0.5 Z" fill="#d0d0d0"/></svg>
<div class="a" style="left:1px;top:427.5px;width:711px;height:25px;background:#2d2d2d;"></div>
<svg class="a" style="left:20px;top:435px" width="8" height="10" viewBox="0 0 8 10"><path d="M6 1 L2 5 L6 9" stroke="#8a8a8a" stroke-width="1" fill="none"/></svg>
<svg class="a" style="left:46px;top:435px" width="8" height="10" viewBox="0 0 8 10"><path d="M2 1 L6 5 L2 9" stroke="#8a8a8a" stroke-width="1" fill="none"/></svg>
<svg class="a" style="left:87px;top:427px" width="56" height="24" viewBox="0 0 56 24"><path d="M0 0.5 H56 V0.5 C52.5 0.5 51 2 51 5 V20 a3.5 3.5 0 0 1 -3.5 3.5 H8 a3.5 3.5 0 0 1 -3.5 -3.5 V5 C4.5 2 3 0.5 0 0.5 Z" fill="#fff"/></svg>
<div class="t" style="left:98.0px;top:431.8px;font-size:11.6px;color:#262626;font-family:'Liberation Sans',sans-serif;transform:scaleX(0.884);transform-origin:0 50%;-webkit-text-stroke:0.45px #262626;">Sheet1</div>
<div class="a" style="left:98px;top:446px;width:33px;height:1.6px;background:#1e8a4c;"></div>
<div class="a" style="left:141px;top:433px;width:1px;height:13px;background:#8a8a8a;"></div>
<svg class="a" style="left:174px;top:435px" width="10" height="10" viewBox="0 0 10 10"><path d="M5 0.5 V9.5 M0.5 5 H9.5" stroke="#e0e0e0" stroke-width="1.1"/></svg>
<div class="a" style="left:429.8px;top:436.7px;width:1.9px;height:1.9px;background:#e4e4e4;"></div>
<div class="a" style="left:429.8px;top:440.1px;width:1.9px;height:1.9px;background:#e4e4e4;"></div>
<div class="a" style="left:429.8px;top:443.4px;width:1.9px;height:1.9px;background:#e4e4e4;"></div>
<div class="a" style="left:443.5px;top:433.2px;width:254px;height:13.8px;background:#3e3e3e;border-radius:7px;"></div>
<svg class="a" style="left:447px;top:436.5px" width="6.5" height="8" viewBox="0 0 6.5 8"><path d="M6 0.3 L0.5 4 L6 7.7 Z" fill="#d4d4d4"/></svg>
<div class="a" style="left:457px;top:437px;width:209px;height:7px;background:#c6c6c6;border-radius:3.5px;"></div>
<svg class="a" style="left:688px;top:436.5px" width="6.5" height="8" viewBox="0 0 6.5 8"><path d="M0.5 0.3 L6 4 L0.5 7.7 Z" fill="#d4d4d4"/></svg>
<div class="a" style="left:1.3px;top:452.8px;width:710.2px;height:17.2px;background:#3a3a3a;"></div>
<div class="t" style="left:7.5px;top:457.8px;font-size:9.3px;color:#e4e4e4;font-family:'Liberation Sans',sans-serif;transform:scaleX(0.874);transform-origin:0 50%;">Ready</div>
<div class="t" style="left:42.8px;top:457.8px;font-size:9.3px;color:#e4e4e4;font-family:'Liberation Sans',sans-serif;transform:scaleX(0.901);transform-origin:0 50%;">Sheet 1 of 1</div>
<div class="t" style="left:100.0px;top:457.8px;font-size:9.3px;color:#e4e4e4;font-family:'Liberation Sans',sans-serif;transform:scaleX(0.896);transform-origin:0 50%;">Workbook Statistics</div>
<svg class="a" style="left:189px;top:457px" width="13" height="12" viewBox="0 0 13 12"><rect x="0.6" y="1.6" width="11" height="9" stroke="#d8d8d8" stroke-width="1" fill="#6a6a6a"/><path d="M0.6 4.4 H11.6 M4 1.6 V4.4" stroke="#d8d8d8" stroke-width="0.9"/><circle cx="8.6" cy="8.2" r="2.6" fill="#3a3a3a" stroke="#d8d8d8" stroke-width="1"/><circle cx="8.6" cy="8.2" r="0.9" fill="#d8d8d8"/></svg>
<svg class="a" style="left:214px;top:457px" width="12" height="12" viewBox="0 0 12 12"><circle cx="5" cy="1.8" r="1.3" stroke="#e0e0e0" stroke-width="0.9" fill="none"/><path d="M0.8 4.2 L4 5 V8 L2.4 11.4 M9.2 4.2 L6 5 V8 L7.6 11.4 M4 5 H6" stroke="#e0e0e0" stroke-width="0.9" fill="none"/><path d="M7.6 8.4 L9 9.8 L11.6 6.8" stroke="#e0e0e0" stroke-width="0.9" fill="none"/></svg>
<div class="t" style="left:228.0px;top:457.8px;font-size:9.3px;color:#e4e4e4;font-family:'Liberation Sans',sans-serif;transform:scaleX(0.910);transform-origin:0 50%;">Accessibility: Good to go</div>
<div class="t" style="left:347.0px;top:457.8px;font-size:9.3px;color:#e4e4e4;font-family:'Liberation Sans',sans-serif;transform:scaleX(0.900);transform-origin:0 50%;">Average: 3.5</div>
<div class="t" style="left:411.4px;top:457.8px;font-size:9.3px;color:#e4e4e4;font-family:'Liberation Sans',sans-serif;transform:scaleX(0.870);transform-origin:0 50%;">Count: 6</div>
<div class="t" style="left:454.7px;top:457.8px;font-size:9.3px;color:#e4e4e4;font-family:'Liberation Sans',sans-serif;transform:scaleX(0.846);transform-origin:0 50%;">Sum: 21</div>
<div class="a" style="left:501px;top:453px;width:28px;height:17px;background:#4a4a4a;"></div>
<svg class="a" style="left:509.5px;top:457.5px" width="11" height="11" viewBox="0 0 11 11"><rect x="0.6" y="0.6" width="9.8" height="9.8" stroke="#f0f0f0" stroke-width="1" fill="none"/><path d="M0.6 3.9 H10.4 M0.6 7.1 H10.4 M3.9 0.6 V10.4 M7.1 0.6 V10.4" stroke="#f0f0f0" stroke-width="0.9"/></svg>
<svg class="a" style="left:541px;top:457.5px" width="11" height="11" viewBox="0 0 11 11"><rect x="0.6" y="0.6" width="9.8" height="9.8" stroke="#e0e0e0" stroke-width="1" fill="none"/><rect x="3" y="2.8" width="5" height="5.4" stroke="#e0e0e0" stroke-width="0.9" fill="none"/></svg>
<svg class="a" style="left:573px;top:457.5px" width="11" height="11" viewBox="0 0 11 11"><rect x="0.6" y="0.6" width="9.8" height="9.8" stroke="#e0e0e0" stroke-width="1" fill="none"/><path d="M3.6 0.6 V6 H7.4 V0.6" stroke="#e0e0e0" stroke-width="1" fill="none"/></svg>
<div class="a" style="left:599px;top:463px;width:5px;height:1px;background:#e0e0e0;"></div>
<div class="a" style="left:609px;top:463px;width:81px;height:1px;background:#a0a0a0;"></div>
<div class="a" style="left:648px;top:458.5px;width:3.5px;height:9.5px;background:#d8d8d8;"></div>
<svg class="a" style="left:693px;top:459.5px" width="7" height="7" viewBox="0 0 7 7"><path d="M3.5 0 V7 M0 3.5 H7" stroke="#e0e0e0" stroke-width="1"/></svg>
</body></html>
